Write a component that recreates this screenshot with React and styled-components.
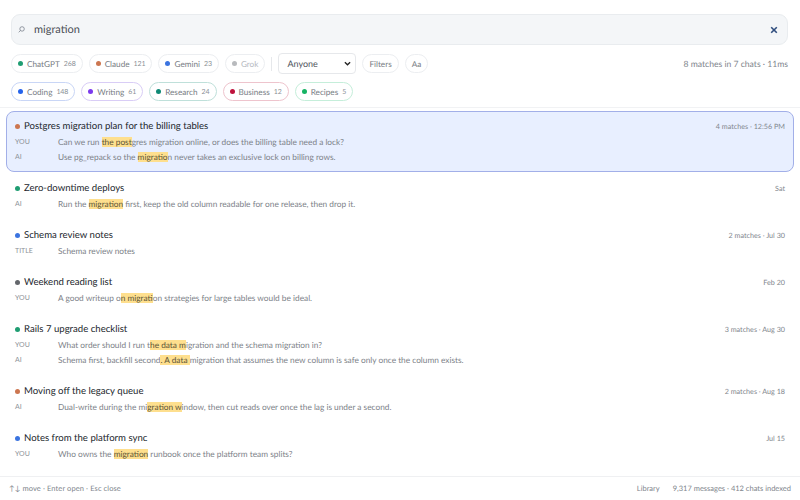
import React from 'react';
import styled, { createGlobalStyle } from 'styled-components';

const Global = createGlobalStyle`
  html, body { margin: 0; padding: 0; background: #fff; }
  body {
    font-family: "Lato", "Noto Sans", sans-serif;
    color: #1f2328;
    text-rendering: geometricPrecision;
  }
  * { box-sizing: border-box; }
`;

const Page = styled.div`
  width: 800px;
  height: 500px;
  display: flex;
  flex-direction: column;
  overflow: hidden;
`;

const Header = styled.header`
  padding: 14px 12px 6px 11px;
  border-bottom: 1px solid #f1f2f4;
  display: flex;
  flex-direction: column;
`;

const SearchBar = styled.div`
  height: 31px;
  display: flex;
  align-items: center;
  background: #f4f6f8;
  border: 1px solid #e9ecef;
  border-radius: 9px;
  padding: 0 9px 0 6px;
`;

const SearchGlyph = styled.svg`
  width: 7px;
  height: 7px;
  margin-right: 9px;
  color: #6b7280;
`;

const SearchText = styled.span`
  flex: 1;
  font-size: 11px;
  color: #4a4f56;
`;

const ClearGlyph = styled.svg`
  width: 8px;
  height: 8px;
  color: #2f4d7e;
`;

const ChipRow = styled.div`
  display: flex;
  align-items: center;
  gap: 6px;
  margin-top: ${(p) => p.$top}px;
`;

const Chip = styled.span`
  height: 19px;
  display: inline-flex;
  align-items: center;
  padding: 0 6px;
  background: #fff;
  border: 1px solid ${(p) => p.$border || '#eceef1'};
  border-radius: 10px;
  font-size: 8.2px;
  color: ${(p) => (p.$dim ? '#b5b9bf' : '#777c83')};
  white-space: nowrap;
`;

const Dot = styled.i`
  width: 5px;
  height: 5px;
  border-radius: 50%;
  background: ${(p) => p.$color};
  margin-right: 4px;
  flex: none;
`;

const Count = styled.span`
  margin-left: 4px;
  font-size: 7px;
  letter-spacing: -0.1px;
  color: #8a8f96;
`;

const Rule = styled.span`
  width: 1px;
  height: 14px;
  background: #e6e8eb;
`;

const Select = styled.span`
  width: 78px;
  height: 21px;
  display: flex;
  align-items: center;
  justify-content: space-between;
  padding: 0 4px 0 8px;
  background: #fff;
  border: 1px solid #e6e8eb;
  border-radius: 4px;
  font-size: 9px;
  color: #50555c;
`;

const Chevron = styled.svg`
  width: 7px;
  height: 5px;
  color: #222;
`;

const Summary = styled.span`
  margin-left: auto;
  font-size: 8.6px;
  color: #80858c;
`;

const List = styled.main`
  flex: 1;
  min-height: 0;
  padding: 3px 6px 0;
`;

const Result = styled.article`
  padding: ${(p) => (p.$active ? '7px 8px 7px' : '7px 8px 0')};
  margin-bottom: ${(p) => (p.$active ? 1 : 8)}px;
  border: 1px solid ${(p) => (p.$active ? '#a2afe8' : 'transparent')};
  border-radius: 8px;
  background: ${(p) => (p.$active ? '#e8efff' : 'transparent')};
`;

const TitleRow = styled.div`
  height: 14px;
  display: flex;
  align-items: center;
`;

const Title = styled.h3`
  margin: 0;
  font-size: 9.6px;
  font-weight: 400;
  color: #23272d;
`;

const Meta = styled.span`
  margin-left: auto;
  font-size: 7.2px;
  color: #81868d;
`;

const Snippet = styled.div`
  display: flex;
  align-items: center;
  height: 15px;
  margin-top: ${(p) => (p.$first ? 1 : 0)}px;
  font-size: 8.3px;
  color: #7c8188;
  white-space: nowrap;
`;

const Role = styled.span`
  width: 43px;
  font-size: 7px;
  color: #8d9197;
`;

const Mark = styled.mark`
  background: #fedf8e;
  color: #5b5436;
`;

const Footer = styled.footer`
  height: 24px;
  display: flex;
  align-items: center;
  padding: 0 9px;
  border-top: 1px solid #eff0f2;
  font-size: 7.5px;
  color: #80858c;
`;

const Keys = styled.span`
  letter-spacing: 0.1px;
`;

const FootRight = styled.span`
  margin-left: auto;
  display: flex;
  gap: 13px;
`;

const sources = [
  ['ChatGPT', '268', '#1f9d72'],
  ['Claude', '121', '#cc7650'],
  ['Gemini', '23', '#3b74e0'],
  ['Grok', '', '#b8babd'],
];

const topics = [
  ['Coding', '148', '#2563eb', '#c9d6f6'],
  ['Writing', '61', '#7c3aed', '#d9cdf6'],
  ['Research', '24', '#0f8a75', '#bfe0da'],
  ['Business', '12', '#be123c', '#eec4cd'],
  ['Recipes', '5', '#16b364', '#c5eeda'],
];

const results = [
  {
    title: 'Postgres migration plan for the billing tables',
    dot: '#cc7650',
    meta: '4 matches · 12:56 PM',
    active: true,
    lines: [
      ['YOU', 'Can we run ', 'the post', 'gres migration online, or does the billing table need a lock?'],
      ['AI', 'Use pg_repack so the ', ' migratio', 'n never takes an exclusive lock on billing rows.'],
    ],
  },
  {
    title: 'Zero-downtime deploys',
    dot: '#1f9d72',
    meta: 'Sat',
    lines: [['AI', 'Run the ', 'migration', ' first, keep the old column readable for one release, then drop it.']],
  },
  {
    title: 'Schema review notes',
    dot: '#3b74e0',
    meta: '2 matches · Jul 30',
    lines: [['TITLE', 'Schema review notes', '', '']],
  },
  {
    title: 'Weekend reading list',
    dot: '#63666b',
    meta: 'Feb 20',
    lines: [['YOU', 'A good writeup o', 'n migrati', 'on strategies for large tables would be ideal.']],
  },
  {
    title: 'Rails 7 upgrade checklist',
    dot: '#1f9d72',
    meta: '3 matches · Aug 30',
    lines: [
      ['YOU', 'What order should I run t', 'he data m', 'igration and the schema migration in?'],
      ['AI', 'Schema first, backfill second', '. A data ', 'migration that assumes the new column is safe only once the column exists.'],
    ],
  },
  {
    title: 'Moving off the legacy queue',
    dot: '#cc7650',
    meta: '2 matches · Aug 18',
    lines: [['AI', 'Dual-write during the mi', 'gration w', 'indow, then cut reads over once the lag is under a second.']],
  },
  {
    title: 'Notes from the platform sync',
    dot: '#3b74e0',
    meta: 'Jul 15',
    lines: [['YOU', 'Who owns the ', 'migration', ' runbook once the platform team splits?']],
  },
];

const App = () => (
  <Page>
    <Global />
    <Header>
      <SearchBar>
        <SearchGlyph viewBox="0 0 10 10" fill="none" stroke="currentColor" strokeWidth="1">
          <circle cx="5.8" cy="4.2" r="3.2" />
          <path d="M3.5 6.5 1 9" />
        </SearchGlyph>
        <SearchText>migration</SearchText>
        <ClearGlyph viewBox="0 0 10 10" fill="none" stroke="currentColor" strokeWidth="2">
          <path d="M1.5 1.5l7 7M8.5 1.5l-7 7" />
        </ClearGlyph>
      </SearchBar>
      <ChipRow $top={8}>
        {sources.map(([name, count, color]) => (
          <Chip key={name} $dim={!count}>
            <Dot $color={color} />
            {name}
            {count && <Count>{count}</Count>}
          </Chip>
        ))}
        <Rule />
        <Select>
          Anyone
          <Chevron viewBox="0 0 8 5" fill="none" stroke="currentColor" strokeWidth="1.5">
            <path d="M1 1l3 3 3-3" />
          </Chevron>
        </Select>
        <Chip>Filters</Chip>
        <Chip>Aa</Chip>
        <Summary>8 matches in 7 chats · 11ms</Summary>
      </ChipRow>
      <ChipRow $top={8}>
        {topics.map(([name, count, color, border]) => (
          <Chip key={name} $border={border}>
            <Dot $color={color} />
            {name}
            <Count>{count}</Count>
          </Chip>
        ))}
      </ChipRow>
    </Header>
    <List>
      {results.map((r) => (
        <Result key={r.title} $active={r.active}>
          <TitleRow>
            <Dot $color={r.dot} />
            <Title>{r.title}</Title>
            <Meta>{r.meta}</Meta>
          </TitleRow>
          {r.lines.map(([role, before, hit, after], i) => (
            <Snippet key={role} $first={i === 0}>
              <Role>{role}</Role>
              <span>
                {before}
                {hit && <Mark>{hit}</Mark>}
                {after}
              </span>
            </Snippet>
          ))}
        </Result>
      ))}
    </List>
    <Footer>
      <Keys>↑↓ move · Enter open · Esc close</Keys>
      <FootRight>
        <span>Library</span>
        <span>9,317 messages · 412 chats indexed</span>
      </FootRight>
    </Footer>
  </Page>
);

export default App;
